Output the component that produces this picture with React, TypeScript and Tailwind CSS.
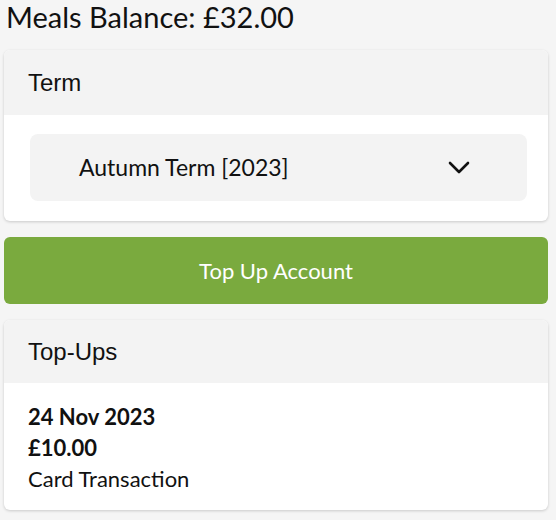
import React from "react";

export default function App() {
  return (
    <div className="min-h-[520px] bg-[#f5f5f5] pl-[4px] pr-[8px]" style={{ fontFamily: "Lato, 'Noto Sans', sans-serif" }}>
      <h1 className="ml-[2px] text-[29px] leading-[34px] text-[#111] h-[50px]">Meals Balance: £32.00</h1>

      <div className="rounded-[6px] bg-white shadow-[0_1px_3px_rgba(0,0,0,0.18)] overflow-hidden">
        <div className="h-[65px] bg-[#f3f3f3] pl-[24px] flex items-center text-[24px] text-[#111]" style={{ fontFamily: "'Liberation Sans', Arial, sans-serif" }}>
          Term
        </div>
        <div className="pl-[26px] pr-[21px] pt-[19px] pb-[20px]">
          <div className="h-[67px] rounded-[8px] bg-[#f3f3f3] flex items-center justify-between pl-[49px] pr-[57px]">
            <span className="text-[23px] text-[#111]">Autumn Term [2023]</span>
            <svg width="22" height="14" viewBox="0 0 22 14" fill="none">
              <path d="M2 2 L11 11 L20 2" stroke="#111" strokeWidth="2.6" strokeLinecap="round" strokeLinejoin="round" />
            </svg>
          </div>
        </div>
      </div>

      <button className="mt-[16px] w-full h-[67px] rounded-[6px] bg-[#7aaa3e] text-white text-[22px] flex items-center justify-center">
        Top Up Account
      </button>

      <div className="mt-[16px] rounded-[6px] bg-white shadow-[0_1px_3px_rgba(0,0,0,0.18)] overflow-hidden">
        <div className="h-[63px] bg-[#f3f3f3] pl-[24px] flex items-center text-[24px] text-[#111]" style={{ fontFamily: "'Liberation Sans', Arial, sans-serif" }}>
          Top-Ups
        </div>
        <div className="pl-[24px] pt-[18px] pb-[16px] text-[22px] leading-[31px] text-[#111]">
          <div className="font-bold">24 Nov 2023</div>
          <div className="font-bold">£10.00</div>
          <div>Card Transaction</div>
        </div>
      </div>
    </div>
  );
}
